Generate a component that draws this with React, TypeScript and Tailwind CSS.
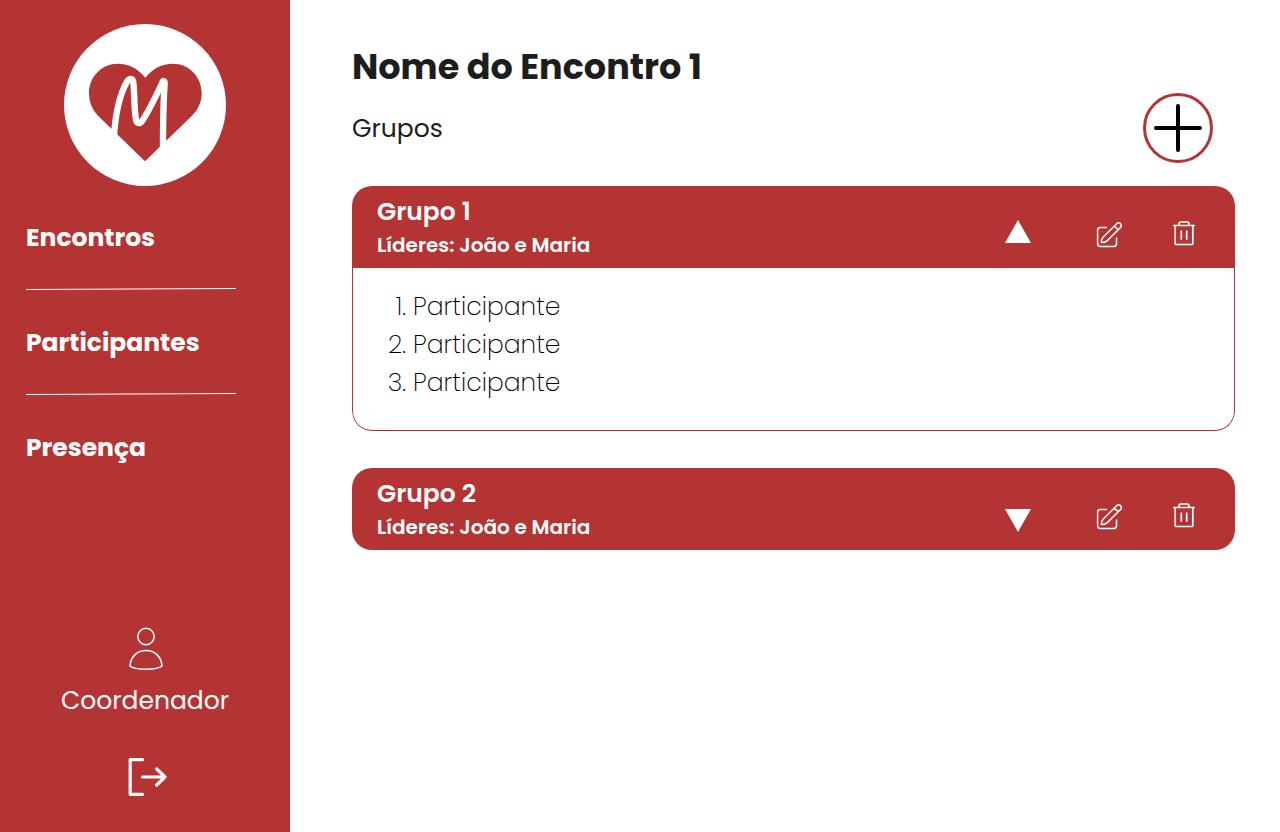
import { useState } from "react";

function Logo() {
  return (
    <svg viewBox="28 27 486 486" className="size-[162px]" role="img" aria-label="Logo">
      <circle cx="271" cy="270" r="243" fill="#fff" />
      <path
        d="M272 188C250 160 222 146 190 146C140 146 103 186 103 234C103 262 113 284 130 302L271 439L412 302C430 284 441 262 441 234C441 186 404 146 354 146C322 146 294 160 272 188Z"
        fill="#b43434"
      />
      <path
        d="M178 364C182 300 196 238 216 202C222 189 234 187 236 202C240 240 238 280 244 314C247 327 258 327 263 317C284 286 303 245 321 207C325 195 331 195 330 208C326 260 325 330 325 400"
        fill="none"
        stroke="#fff"
        strokeWidth="19"
        strokeLinecap="butt"
        strokeLinejoin="round"
      />
    </svg>
  );
}

function Divider() {
  return (
    <svg viewBox="0 0 210 2" className="mt-[30px] mb-[33px] h-[2px] w-[210px]" aria-hidden="true">
      <line x1="0" y1="1.5" x2="210" y2="0.5" stroke="#fff" strokeWidth="1" />
    </svg>
  );
}

function TriangleIcon({ open }: { open: boolean }) {
  return (
    <svg viewBox="0 0 30 30" className={open ? "size-[30px]" : "size-[30px] rotate-180"} aria-hidden="true">
      <path d="M15 0L28 23H2Z" fill="#fff" />
    </svg>
  );
}

function EditIcon() {
  return (
    <svg viewBox="0 0 30 30" className="size-[30px]" fill="none" stroke="#fff" strokeWidth="1.5" strokeLinecap="round" strokeLinejoin="round" aria-hidden="true">
      <path d="M12.5 7.500H6.200A2.600 2.600 0 0 0 3.600 10.100V23.800A2.600 2.600 0 0 0 6.200 26.400H19.900A2.600 2.600 0 0 0 22.500 23.800V18" />
      <path d="M7.300 22.600C7.300 20 8 18.300 9.500 16.800L22.600 3.700A2.700 2.700 0 0 1 26.500 7.500L13.300 20.600C11.800 22 10 22.700 7.300 22.600ZM20.300 6L24.200 9.800" />
    </svg>
  );
}

function TrashIcon() {
  return (
    <svg viewBox="0 0 30 30" className="size-[30px]" fill="none" stroke="#fff" strokeWidth="1.7" strokeLinecap="round" strokeLinejoin="round" aria-hidden="true">
      <path d="M4.800 5.500H25.200M10 5.300V3.800A1.800 1.800 0 0 1 11.800 2H18.200A1.800 1.800 0 0 1 20 3.800V5.300" />
      <path d="M6.200 5.500V23.500A1 1 0 0 0 7.200 24.500H22.800A1 1 0 0 0 23.800 23.500V5.500M12.300 11V19M17.700 11V19" />
    </svg>
  );
}

interface GroupProps {
  name: string;
  leaders: string;
  members: string[];
  initiallyOpen?: boolean;
}

function Group({ name, leaders, members, initiallyOpen = false }: GroupProps) {
  const [open, setOpen] = useState(initiallyOpen);
  return (
    <section className="overflow-hidden rounded-[20px]">
      <div className="flex justify-between bg-[#b43434] pr-9 pl-[25px] text-white">
        <div className="pt-[7px] pb-[9px]">
          <h3 className="text-[25px] leading-[38px] font-semibold">{name}</h3>
          <p className="text-[20px] leading-7 font-semibold">Líderes: {leaders}</p>
        </div>
        <div className="flex items-center pt-4">
          <button type="button" aria-label="Mostrar participantes" aria-expanded={open} onClick={() => setOpen(!open)} className="mr-[61px]">
            <TriangleIcon open={open} />
          </button>
          <button type="button" aria-label="Editar grupo" className="mr-[45px]">
            <EditIcon />
          </button>
          <button type="button" aria-label="Excluir grupo">
            <TrashIcon />
          </button>
        </div>
      </div>
      {open && (
        <ol className="list-decimal rounded-b-[20px] border border-t-0 border-[#b43434] pt-5 pb-7 pl-[60px] font-['Poppins_ExtraLight','Poppins','Inter',sans-serif] text-[25px] leading-[38px] font-extralight text-black">
          {members.map((member, index) => (
            <li key={index}>{member}</li>
          ))}
        </ol>
      )}
    </section>
  );
}

export default function App() {
  return (
    <div className="flex min-h-screen bg-white font-['Poppins','Inter',sans-serif]">
      <aside className="flex w-[290px] shrink-0 flex-col bg-[#b43434] pt-6 pb-[35px] text-white">
        <div className="flex justify-center">
          <Logo />
        </div>
        <nav className="mt-8 flex flex-col pl-[26px] text-[25px] leading-10 font-bold">
          <a href="#encontros">Encontros</a>
          <Divider />
          <a href="#participantes">Participantes</a>
          <Divider />
          <a href="#presenca">Presença</a>
        </nav>
        <div className="mt-auto flex flex-col items-center">
          <svg viewBox="0 0 36 44" className="ml-[2px] h-11 w-9" fill="none" stroke="#fff" strokeWidth="1.5" aria-hidden="true">
            <circle cx="18" cy="9.500" r="8.200" />
            <path d="M2 39C2.500 30 9 23.500 18 23.500S33.500 30 34 39C29 43.300 7 43.300 2 39Z" strokeLinejoin="round" />
          </svg>
          <p className="mt-[10px] text-[25px] leading-10">Coordenador</p>
          <button type="button" aria-label="Sair" className="mt-9 ml-[6px]">
            <svg viewBox="0 0 40 40" className="size-10" fill="none" stroke="#fff" strokeWidth="3.2" strokeLinecap="round" strokeLinejoin="round" aria-hidden="true">
              <path d="M14.500 2.700H2.200V37.300H14.500M14.500 20H37M28.700 12L37 20L28.700 28" />
            </svg>
          </button>
        </div>
      </aside>
      <main className="min-w-0 flex-1 pt-[41px] pr-[45px] pb-10 pl-[62px]">
        <h1 className="text-[35px] leading-[52px] font-bold text-[#1d1d1b]">Nome do Encontro 1</h1>
        <div className="flex items-center justify-between pr-[22px]">
          <h2 className="pt-[2px] text-[25px] leading-10 text-[#1d1d1b]">Grupos</h2>
          <button type="button" aria-label="Adicionar grupo" className="flex size-[70px] items-center justify-center rounded-full border-3 border-[#b43434]">
            <svg viewBox="0 0 48 48" className="size-12" stroke="#000" strokeWidth="4" strokeLinecap="round" aria-hidden="true">
              <path d="M24 2V46M2 24H46" />
            </svg>
          </button>
        </div>
        <div className="mt-[23px] flex flex-col gap-[37px]">
          <Group name="Grupo 1" leaders="João e Maria" members={["Participante", "Participante", "Participante"]} initiallyOpen />
          <Group name="Grupo 2" leaders="João e Maria" members={["Participante", "Participante", "Participante"]} />
        </div>
      </main>
    </div>
  );
}
